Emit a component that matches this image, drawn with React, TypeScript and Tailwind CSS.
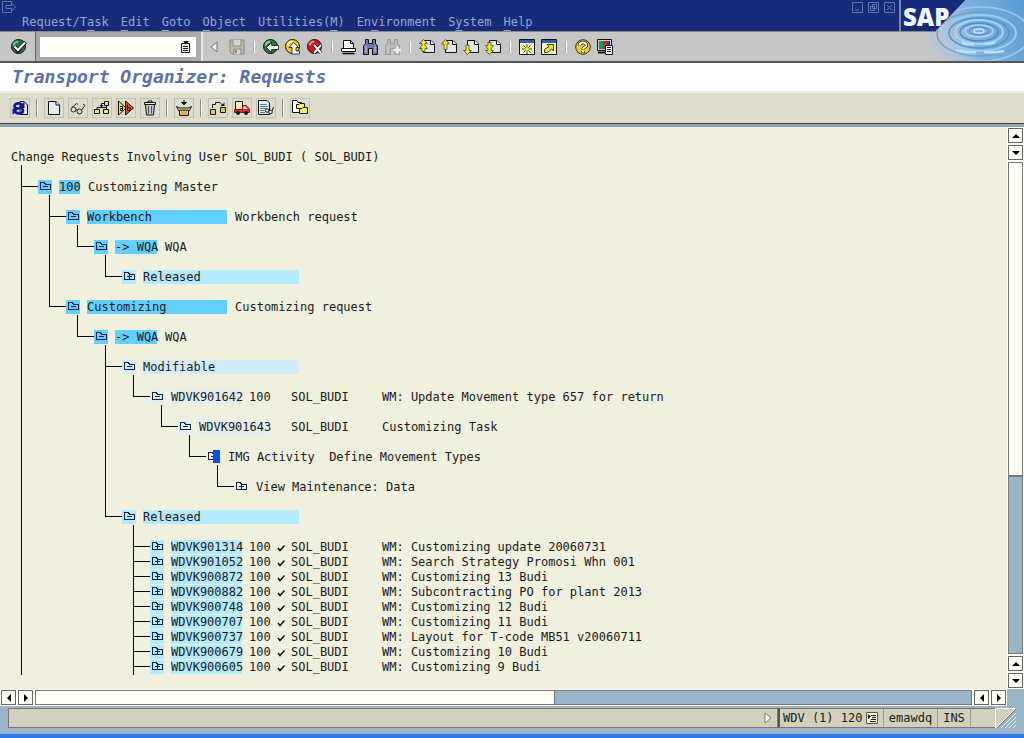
import React from 'react';

const fontMono = "font-['DejaVu_Sans_Mono','Liberation_Mono',monospace]";

/* ---------- icons ---------- */

function Icon({ children, className = 'w-4 h-4' }: { children: React.ReactNode; className?: string }) {
  return (
    <svg viewBox="0 0 16 16" className={`block shrink-0 ${className}`} aria-hidden="true">
      {children}
    </svg>
  );
}

const Ball = ({ fill, shine }: { fill: string; shine: string }) => (
  <>
    <circle cx="7.5" cy="7.5" r="7" fill={fill} stroke="#111" />
    <path d="M2.5 6.5A5 5 0 0 1 7 2.5" stroke={shine} strokeWidth="2" fill="none" />
  </>
);

const EnterIcon = () => (
  <Icon>
    <Ball fill="#1f7a3c" shine="#7fce8d" />
    <path d="M3.5 7.5L7 11.5L14.5 3" stroke="#111" strokeWidth="4" fill="none" />
    <path d="M3.5 7.5L7 11L14 3.5" stroke="#fff" strokeWidth="2.2" fill="none" />
  </Icon>
);

const BackIcon = () => (
  <Icon>
    <Ball fill="#1f7a3c" shine="#8fd89b" />
    <path d="M3.5 8.5L8.5 3.5V6.5H15.5V10.5H8.5V13.5Z" fill="#fff" stroke="#111" strokeWidth=".8" />
  </Icon>
);

const ExitIcon = () => (
  <Icon>
    <Ball fill="#f2c81c" shine="#fff7a0" />
    <path d="M8.5 3.5L13.5 8.5H11V12H14.5V15H7V8.5H4Z" fill="#fff" stroke="#111" strokeWidth=".8" />
  </Icon>
);

const CancelIcon = () => (
  <Icon>
    <Ball fill="#d01424" shine="#ff8d8d" />
    <path d="M7 6L14 14M14 6L7 14" stroke="#111" strokeWidth="3.4" />
    <path d="M7 6L14 14M14 6L7 14" stroke="#fff" strokeWidth="2" />
  </Icon>
);

const SaveIcon = () => (
  <Icon>
    <path d="M1 1H15V15H3L1 13Z" fill="#c5b9a3" stroke="#8b857b" />
    <path d="M4 1V7H12V1M5 15V10H12V15" fill="#d6d3cc" stroke="#8b857b" />
    <path d="M7 11V14" stroke="#8b857b" strokeWidth="2" />
  </Icon>
);

const PrintIcon = () => (
  <Icon>
    <path d="M2.5 9.5V1.5H9.5L12.5 4.5V9.5" fill="#fff" stroke="#111" />
    <path d="M9.5 1.5V4.5H12.5" fill="none" stroke="#111" />
    <path d="M.5 9.5H14.5V12.5H.5Z" fill="#fff" stroke="#111" />
    <path d="M1.5 14.5H13.5" stroke="#111" strokeWidth="1.6" />
  </Icon>
);

const FindIcon = ({ dim = false }: { dim?: boolean }) => (
  <Icon>
    <path
      d="M2.5 .5H5.5V4.5H9.5V.5H12.5V4.5L14.5 7V15.5H9.5V9.5H5.5V15.5H.5V7L2.5 4.5Z"
      fill={dim ? '#b9b9b9' : '#6d77a8'}
      stroke={dim ? '#999' : '#111'}
    />
    <path d="M3 6.5V13.5M12 6.5V13.5" stroke={dim ? '#d2d2d2' : '#c3cbe6'} />
    {dim && <path d="M9 11H16M12.5 7.5V14.5" stroke="#eee" strokeWidth="2.4" />}
  </Icon>
);

const pageArrows = {
  first: 'M4.5 .5L8.5 4.5H6V6L8.5 9.5H6V12.5H3V9.5H.5L3 6V4.5H.5Z',
  prev: 'M4.5 .5L8.5 5H6V10.5H3V5H.5Z',
  next: 'M4.5 15.5L8.5 11.5H6V6H3V11.5H.5Z',
  last: 'M4.5 15.5L8.5 11.5H6V10L8.5 6.5H6V3.5H3V6.5H.5L3 10V11.5H.5Z',
};

// sheet with one or two page arrows beside it
const PageIcon = ({ kind }: { kind: keyof typeof pageArrows }) => (
  <Icon>
    <path d="M4.5 1.5H12L15.5 5V13.5H4.5Z" fill="#dbe8f4" stroke="#111" />
    <path d="M11.5 1.5V5.5H15.5" fill="#fff" stroke="#111" />
    <path d={pageArrows[kind]} fill="#f8ea1c" stroke="#333" strokeWidth=".7" />
  </Icon>
);

const SessionIcon = () => (
  <Icon>
    <path d="M.5 .5H15.5V15.5H.5Z" fill="#fffcc0" stroke="#111" />
    <path d="M1 1H15V4H1Z" fill="#2a62a8" />
    <path d="M8 5V15M3 10H13M4.5 6.5L11.5 13.5M11.5 6.5L4.5 13.5" stroke="#222" strokeWidth=".9" />
    <circle cx="8" cy="10" r="2" fill="#f5e625" />
  </Icon>
);

const ShortcutIcon = () => (
  <Icon>
    <path d="M.5 .5H15.5V15.5H.5Z" fill="#fffcc0" stroke="#111" />
    <path d="M1 1H15V4H1Z" fill="#2a62a8" />
    <path d="M3.5 13.5V10.5L8 7.5L6 5.5H12.5V12L10.5 10L6.5 13.5Z" fill="#f5e625" stroke="#222" strokeWidth=".9" />
  </Icon>
);

const HelpIcon = () => (
  <Icon>
    <circle cx="8" cy="8" r="7.3" fill="#f0cf28" stroke="#3a2d08" />
    <path d="M4.5 6.5C4.5 2.5 11.5 2.5 11.5 6.3C11.5 8.3 8 8 8 10.5M8 12V14" fill="none" stroke="#222" strokeWidth="3.4" />
    <path d="M4.5 6.5C4.5 2.5 11.5 2.5 11.5 6.3C11.5 8.3 8 8 8 10.3M8 12V13.6" fill="none" stroke="#fff" strokeWidth="1.9" />
  </Icon>
);

const LayoutIcon = () => (
  <Icon>
    <path d="M.5 .5H14.5V11.5H.5Z" fill="#ccc" stroke="#111" />
    <path d="M2 2H6V10H2Z" fill="#1c9a4c" />
    <path d="M6 2H10V10H6Z" fill="#d3202c" />
    <path d="M10 2H13V10H10Z" fill="#2840b8" />
    <path d="M1 13.5H9" stroke="#111" strokeWidth="2" />
    <path d="M8.5 6.5H15.5V15.5H8.5Z" fill="#fff" stroke="#111" />
    <path d="M10 8.5H14M10 10.5H14M10 12.5H14" stroke="#111" />
  </Icon>
);

const RefreshIcon = () => (
  <Icon>
    <path d="M8 1.5H12L15.5 5V14.5H8Z" fill="#dbe8f4" stroke="#111" />
    <path d="M10.5 5.5C8.5 2 2.5 3 2.5 6.5C2.5 8.5 5 8.5 7 8.5" fill="none" stroke="#10189a" strokeWidth="2.6" />
    <path d="M12.5 1.5V8H6.5Z" fill="#10189a" />
    <path d="M2.5 11C4.5 14.5 11 14 11 10.5C11 8.5 9 8 7 8" fill="none" stroke="#10189a" strokeWidth="2.6" />
    <path d="M.5 15V8.5H6.5Z" fill="#10189a" />
  </Icon>
);

const CreateIcon = () => (
  <Icon>
    <path d="M2.5 1.5H10L13.5 5V14.5H2.5Z" fill="#e2edf7" stroke="#111" />
    <path d="M10 1.5V5H13.5" fill="#fff" stroke="#111" />
  </Icon>
);

const GlassesIcon = () => (
  <Icon>
    <g fill="none" stroke="#222">
      <circle cx="3.5" cy="9.5" r="2.5" />
      <circle cx="9.5" cy="11.5" r="2.5" />
      <path d="M6 10C6.5 9 7.2 9.4 7.4 10.2M2 7.5L6.5 3.5L8 4.5M11.5 10L15 5.5L13 4" />
    </g>
  </Icon>
);

const HierarchyIcon = () => (
  <Icon>
    <path d="M10.5 1.5H14.5V5.5H10.5ZM.5 9.5H5.5V13.5H.5ZM9.5 9.5H14.5V13.5H9.5Z" fill="#f2e87a" stroke="#111" />
    <path d="M3 9V7.5H12.5M12.5 5.5V9.5M10 3.5H7.5V7" fill="none" stroke="#111" />
    <path d="M5.5 5H9.5L7.5 7.5Z" fill="#111" />
  </Icon>
);

const ReleaseIcon = () => (
  <Icon>
    <path d="M.5 1L8 8L.5 15Z" fill="#f7e51e" stroke="#111" />
    <path d="M7.5 1L15.5 8L7.5 15Z" fill="#e2543a" stroke="#111" />
    <path d="M2 6.5H4.5V10.5H2.5V8.5H4.5M9.5 4.5V10.5H12V7.5H10" fill="none" stroke="#111" />
  </Icon>
);

const TrashIcon = () => (
  <Icon>
    <path d="M3.5 4.5H12.5L11.5 15H4.5Z" fill="#bfc5cc" stroke="#111" />
    <path d="M2.5 2.5H13.5V4.5H2.5ZM6 2.5V1H10V2.5" fill="#e7e9ec" stroke="#111" />
    <path d="M6.5 6V13.5M9.5 6V13.5" stroke="#555" />
  </Icon>
);

const IncludeIcon = () => (
  <Icon>
    <path d="M8 0V4M5.5 2.5L8 5L10.5 2.5Z" stroke="#111" fill="#111" />
    <path d="M.5 6.5L3 8H13L15.5 6.5L13 11H3Z" fill="#fff7c8" stroke="#111" />
    <path d="M3.5 10H12.5V15.5H3.5Z" fill="#e2b04a" stroke="#111" />
  </Icon>
);

const RelateIcon = () => (
  <Icon>
    <path d="M.5 9.5H5.5V14.5H.5ZM10.5 7.5H15.5V12.5H10.5Z" fill="#e6cf3c" stroke="#111" />
    <path d="M2.5 8V4.5H5.5V2.5H10L12.5 5" fill="none" stroke="#111" />
    <path d="M10.5 6H14.5V2.5Z" fill="#111" />
  </Icon>
);

const TruckIcon = () => (
  <Icon>
    <path d="M1.5 1.5H8.5V9.5H1.5Z" fill="#fdf0b0" stroke="#111" />
    <path d="M.5 9.5H8.5V5.5H12L15.5 9V12.5H.5Z" fill="#e22a2a" stroke="#8a1010" />
    <path d="M9.5 6.5H11.5L13.5 9H9.5Z" fill="#fff" />
    <circle cx="4" cy="13" r="2" fill="#111" />
    <circle cx="12" cy="13" r="2" fill="#111" />
  </Icon>
);

const LogIcon = () => (
  <Icon>
    <path d="M.5 .5H9L11.5 3V14.5H.5Z" fill="#e2edf7" stroke="#111" />
    <path d="M2 4.5H9M2 6.5H10M2 8.5H8M2 10.5H6M2 12.5H7" stroke="#59779c" />
    <circle cx="9" cy="10.5" r="1.8" fill="#fff" stroke="#111" />
    <circle cx="12.5" cy="12" r="1.8" fill="#fff" stroke="#111" />
    <path d="M14 11L15.5 7" stroke="#111" />
  </Icon>
);

const StackIcon = () => (
  <Icon>
    <path d="M.5 .5H5L6 2.5H9.5V12.5H.5Z" fill="#fff" stroke="#111" />
    <path d="M4.5 4.5H7L8 3.5H12.5V8.5H4.5Z" fill="#f7ef62" stroke="#111" />
    <path d="M7.5 8.5H10L11 7.5H15.5V13.5H7.5Z" fill="#f7ef62" stroke="#111" />
  </Icon>
);

const FolderIcon = ({ open }: { open: boolean }) => (
  <svg viewBox="0 0 14 14" className="block h-[14px] w-[14px] shrink-0" shapeRendering="crispEdges" aria-hidden="true">
    <path d="M2.5 2.5H6.5L7.5 4.5H12.5V9.5H2.5Z" fill="none" stroke="#0a2350" />
    <path d="M5 6.5H10" stroke="#0a2350" />
    {!open && <path d="M7.5 4V9" stroke="#0a2350" />}
  </svg>
);

/* ---------- header ---------- */

const menus = [
  ['Request/T', 'a', 'sk'],
  ['', 'E', 'dit'],
  ['', 'G', 'oto'],
  ['', 'O', 'bject'],
  ['Utilities(', 'M', ')'],
  ['En', 'v', 'ironment'],
  ['S', 'y', 'stem'],
  ['', 'H', 'elp'],
];

function MenuBar() {
  return (
    <div className="h-[31px] bg-[#172b7a] border-r border-[#8087a0] text-[#98a5d2]">
      <div className="flex h-[14px] items-center justify-between pl-[2px] pr-[4px]">
        <svg viewBox="0 0 14 12" className="h-3 w-[14px]" fill="none" stroke="#6475b4" aria-hidden="true">
          <path d="M9.5 3.5V.5H.5V11.5H9.5V8.5M4 4.5H10V2.5L13.5 6L10 9.5V7.5H4Z" />
        </svg>
        <div className="flex gap-[5px]">
          {[
            ['Minimize', 'M3 8H7'],
            ['Restore', 'M4.5 2.5H8.5V6.5H4.5ZM2.5 4.5H6.5V8.5H2.5Z'],
            ['Close', 'M3 3L8 8M8 3L3 8'],
          ].map(([label, d]) => (
            <button key={label} aria-label={label}>
              <svg viewBox="0 0 11 11" className="block h-[11px] w-[11px]" fill="none" stroke="#6475b4">
                <path d="M.5 .5H10.5V10.5H.5Z" />
                <path d={d} />
              </svg>
            </button>
          ))}
        </div>
      </div>
      <nav className="flex gap-3 pl-[22px] text-[12px] leading-[16px]">
        {menus.map(([before, key, after]) => (
          <button key={before + key + after} className="whitespace-pre">
            {before}
            <span className="underline underline-offset-4">{key}</span>
            {after}
          </button>
        ))}
      </nav>
    </div>
  );
}

const ToolSep = () => <span className="mx-2 h-3 w-[2px] shrink-0 border-l border-[#aaa] bg-white" />;

function Tools({ items }: { items: [string, React.ReactNode][] }) {
  return (
    <div className="flex gap-[6px]">
      {items.map(([label, icon]) => (
        <button key={label} aria-label={label} title={label}>
          {icon}
        </button>
      ))}
    </div>
  );
}

function StandardToolbar() {
  return (
    <div className="flex h-[30px] items-center border-t border-[#8a8a8a] bg-[#c6c6c6]">
      <div className="flex h-full w-[36px] items-center border-r border-[#666] pl-[11px]">
        <button aria-label="Enter">
          <EnterIcon />
        </button>
      </div>
      <div className="flex h-full w-[167px] items-center border-r-2 border-[#e8e8e8] bg-[#aaa] pl-1">
        <div className="flex h-5 w-[156px] items-center bg-[#fffff8] pr-[5px]">
          <input aria-label="Command" className="h-5 min-w-0 flex-1 bg-transparent px-1 text-[12px] outline-none" />
          <button aria-label="Command history">
            <svg viewBox="0 0 10 12" className="h-3 w-[10px]" aria-hidden="true">
              <path d="M.5 2.5H8.5V11.5H.5Z" fill="#fff" stroke="#111" />
              <path d="M2 0H8L5 3.5Z" fill="#111" />
              <path d="M2 5.5H7M2 7.5H7M2 9.5H7" stroke="#111" />
            </svg>
          </button>
        </div>
      </div>
      <button aria-label="Collapse command field" className="ml-[7px] mr-[11px]">
        <svg viewBox="0 0 8 12" className="h-3 w-2" aria-hidden="true">
          <path d="M7 1V11L1 6Z" fill="#eee" stroke="#777" />
        </svg>
      </button>
      <Tools items={[['Save', <SaveIcon />]]} />
      <ToolSep />
      <Tools
        items={[
          ['Back', <BackIcon />],
          ['Exit', <ExitIcon />],
          ['Cancel', <CancelIcon />],
        ]}
      />
      <ToolSep />
      <Tools
        items={[
          ['Print', <PrintIcon />],
          ['Find', <FindIcon />],
          ['Find next', <FindIcon dim />],
        ]}
      />
      <ToolSep />
      <Tools
        items={[
          ['First page', <PageIcon kind="first" />],
          ['Previous page', <PageIcon kind="prev" />],
          ['Next page', <PageIcon kind="next" />],
          ['Last page', <PageIcon kind="last" />],
        ]}
      />
      <ToolSep />
      <Tools
        items={[
          ['New session', <SessionIcon />],
          ['Generate shortcut', <ShortcutIcon />],
        ]}
      />
      <ToolSep />
      <Tools
        items={[
          ['Help', <HelpIcon />],
          ['Customize local layout', <LayoutIcon />],
        ]}
      />
    </div>
  );
}

function Brand() {
  return (
    <svg viewBox="0 0 124 61" className="block h-[61px] w-[124px] shrink-0 bg-[#c6c6c6]" role="img" aria-label="SAP">
      <defs>
        <linearGradient id="water" x1="0" x2="1" y1="0.2" y2="0">
          <stop offset="0.1" stopColor="#c6c6c6" />
          <stop offset="0.28" stopColor="#b9c4d3" />
          <stop offset="0.5" stopColor="#80b2dd" />
          <stop offset="1" stopColor="#5a9bd2" />
        </linearGradient>
      </defs>
      <rect width="124" height="61" fill="url(#water)" />
      <g fill="none">
        <ellipse cx="79" cy="31" rx="5" ry="2" stroke="#cfeafd" strokeWidth="1.5" />
        <ellipse cx="79" cy="31" rx="10" ry="4" stroke="#4a8cc8" />
        <ellipse cx="79" cy="31" rx="14" ry="6" stroke="#a9d7f7" strokeWidth="1.5" />
        <ellipse cx="79" cy="32" rx="19" ry="9" stroke="#4a8cc8" strokeWidth="1.5" />
        <ellipse cx="79" cy="32" rx="24" ry="12" stroke="#a2d3f6" strokeWidth="2" />
        <ellipse cx="79" cy="33" rx="30" ry="15" stroke="#5593cb" strokeWidth="1.5" />
        <ellipse cx="80" cy="33" rx="36" ry="18" stroke="#9accf2" strokeWidth="2" />
        <ellipse cx="80" cy="34" rx="43" ry="22" stroke="#6ba3d6" strokeWidth="1.5" />
        <ellipse cx="81" cy="34" rx="49" ry="27" stroke="#a0c8ea" strokeWidth="1.5" />
        <path d="M56 50Q68 53 76 52M84 52Q95 53 104 51M62 43Q68 45 74 44M84 44Q90 44 95 42" stroke="#b5e4ff" strokeWidth="2.5" />
      </g>
      <path d="M0 0H66L36 31H0Z" fill="#172b7a" />
      <path d="M66 0L36 31" stroke="#8fb4dc" />
      <path d="M0 31.5H36" stroke="#8a8a8a" />
      <path d="M.5 0V31" stroke="#8087a0" />
      <text x="3" y="26" fill="#eef8ff" className="font-['Open_Sans',sans-serif] text-[24px] font-extrabold">
        SAP
      </text>
    </svg>
  );
}

/* ---------- application toolbar ---------- */

const appTools: [string, React.ReactNode][][] = [
  [['Refresh', <RefreshIcon />]],
  [
    ['Create', <CreateIcon />],
    ['Display', <GlassesIcon />],
    ['Display request', <HierarchyIcon />],
    ['Release directly', <ReleaseIcon />],
    ['Delete', <TrashIcon />],
  ],
  [['Include objects', <IncludeIcon />]],
  [
    ['Change owner', <RelateIcon />],
    ['Transport', <TruckIcon />],
    ['Logs', <LogIcon />],
  ],
  [['Merge requests', <StackIcon />]],
];

function AppToolbar() {
  return (
    <div className="flex h-[30px] items-center bg-[#dedccb] pl-[10px]">
      {appTools.map((group, i) => (
        <React.Fragment key={i}>
          {i > 0 && <span className="mx-[6px] h-[18px] w-[2px] border-l border-[#8f8d80] bg-white" />}
          <div className="flex gap-1">
            {group.map(([label, icon]) => (
              <button
                key={label}
                aria-label={label}
                title={label}
                className="flex h-5 w-5 items-center justify-center border border-[#c2c0ae]"
              >
                {icon}
              </button>
            ))}
          </div>
        </React.Fragment>
      ))}
    </div>
  );
}

/* ---------- request tree ---------- */

// guides: one character per level. "|" line passes, "T" branch, "L" last branch, " " nothing
interface TreeRow {
  guides: string;
  open?: boolean;
  tone?: string;
  tag?: string;
  tagWidth?: string;
  client?: string;
  done?: boolean;
  owner?: string;
  text?: string;
  cursor?: boolean;
}

const STRONG = 'bg-[#62cffd]';
const RELEASED = 'bg-[#b3eafd]';
const OPEN = 'bg-[#d2ecfb]';
const PALE = 'bg-[#e2eef0]';

const nodes: TreeRow[] = [
  { guides: 'T', open: true, tone: STRONG, tag: '100', tagWidth: 'w-[21px]', text: 'Customizing Master' },
  { guides: '|T', open: true, tone: STRONG, tag: 'Workbench', tagWidth: 'w-[140px]', text: 'Workbench request' },
  { guides: '||L', open: true, tone: STRONG, tag: '-> WQA', tagWidth: 'w-[42px]', text: 'WQA' },
  { guides: '|| L', tone: RELEASED, tag: 'Released', tagWidth: 'w-[156px]' },
  { guides: '|L', open: true, tone: STRONG, tag: 'Customizing', tagWidth: 'w-[140px]', text: 'Customizing request' },
  { guides: '| L', open: true, tone: STRONG, tag: '-> WQA', tagWidth: 'w-[42px]', text: 'WQA' },
  { guides: '|  T', open: true, tone: OPEN, tag: 'Modifiable', tagWidth: 'w-[156px]' },
  {
    guides: '|  |L',
    open: true,
    tone: PALE,
    tag: 'WDVK901642',
    tagWidth: 'w-[71px]',
    client: '100',
    owner: 'SOL_BUDI',
    text: 'WM: Update Movement type 657 for return',
  },
  {
    guides: '|  | L',
    open: true,
    tone: PALE,
    tag: 'WDVK901643',
    tagWidth: 'w-[71px]',
    owner: 'SOL_BUDI',
    text: 'Customizing Task',
  },
  { guides: '|  |  L', open: true, cursor: true, text: 'IMG Activity  Define Movement Types' },
  { guides: '|  |   L', text: 'View Maintenance: Data' },
  { guides: '|  L', open: true, tone: RELEASED, tag: 'Released', tagWidth: 'w-[156px]' },
];

const released: [string, string][] = [
  ['WDVK901314', 'WM: Customizing update 20060731'],
  ['WDVK901052', 'WM: Search Strategy Promosi Whn 001'],
  ['WDVK900872', 'WM: Customizing 13 Budi'],
  ['WDVK900882', 'WM: Subcontracting PO for plant 2013'],
  ['WDVK900748', 'WM: Customizing 12 Budi'],
  ['WDVK900707', 'WM: Customizing 11 Budi'],
  ['WDVK900737', 'WM: Layout for T-code MB51 v20060711'],
  ['WDVK900679', 'WM: Customizing 10 Budi'],
  ['WDVK900605', 'WM: Customizing 9 Budi'],
];

const releasedRows: TreeRow[] = released.map(([tag, text]) => ({
  guides: '|   T',
  tone: RELEASED,
  tag,
  tagWidth: 'w-[71px]',
  client: '100',
  done: true,
  owner: 'SOL_BUDI',
  text,
}));

function Guide({ kind, last }: { kind: string; last: boolean }) {
  return (
    <span className={`flex h-[15px] shrink-0 flex-col ${last ? 'w-[17px]' : 'w-7'}`}>
      <span
        className={`h-[7px] border-black ${kind === ' ' ? '' : 'border-l'} ${kind === 'T' || kind === 'L' ? 'border-b' : ''}`}
      />
      <span className={`h-2 border-black ${kind === '|' || kind === 'T' ? 'border-l' : ''}`} />
    </span>
  );
}

// empty line between two nodes, only the stems go through it
function Spacer({ guides }: { guides: string }) {
  return (
    <div className="flex h-[15px]" aria-hidden="true">
      {guides.split('').map((g, i) => (
        <span key={i} className={`w-7 ${g === ' ' ? '' : 'border-l border-black'}`} />
      ))}
    </div>
  );
}

function Row({ row, spaced }: { row: TreeRow; spaced: boolean }) {
  const { guides, open = false, tone = '', tag, tagWidth = '', client, done, owner, text, cursor } = row;
  return (
    <li>
      {spaced && <Spacer guides={guides} />}
      <div className="flex h-[15px] whitespace-pre">
        {guides.split('').map((g, i) => (
          <Guide key={i} kind={g} last={i === guides.length - 1} />
        ))}
        <button aria-label={open ? 'Collapse' : 'Expand'} className={`relative h-[14px] w-[14px] shrink-0 ${tone}`}>
          <FolderIcon open={open} />
          {cursor && <span className="absolute right-0 top-0 h-[13px] w-[7px] bg-[#0a4ef0]" />}
        </button>
        {tag && <span className={`ml-[7px] h-[14px] shrink-0 ${tagWidth} ${tone}`}>{tag}</span>}
        {client && <span className="ml-[7px] w-[21px] shrink-0">{client}</span>}
        {client && (
          <span className="flex w-[21px] shrink-0 items-center justify-center">
            {done && (
              <svg viewBox="0 0 8 8" className="h-2 w-2" aria-label="Released">
                <path d="M1 4L3 6.5L7.5 1.5" fill="none" stroke="#111" strokeWidth="1.5" />
              </svg>
            )}
          </span>
        )}
        {owner && <span className={`w-[91px] shrink-0 ${client ? '' : 'ml-[21px]'}`}>{owner}</span>}
        {text && <span className={owner ? '' : 'ml-2'}>{text}</span>}
      </div>
    </li>
  );
}

function RequestTree() {
  return (
    <main className="min-w-0 flex-1 overflow-hidden pt-[23px] text-[12px] leading-[15px] text-[#1a1a1a]">
      <h2 className="h-[15px] whitespace-pre pl-[11px]">Change Requests Involving User SOL_BUDI ( SOL_BUDI)</h2>
      <ul className="pl-[21px]">
        {nodes.map((row, i) => (
          <Row key={i} row={row} spaced />
        ))}
        {releasedRows.map((row, i) => (
          <Row key={row.tag} row={row} spaced={i === 0} />
        ))}
      </ul>
    </main>
  );
}

/* ---------- scroll bars ---------- */

const arrows = {
  up: 'M4 2L8 6H0Z',
  down: 'M4 6L8 2H0Z',
  left: 'M2 4L6 0V8Z',
  right: 'M6 4L2 0V8Z',
};

function ScrollButton({ dir }: { dir: keyof typeof arrows }) {
  return (
    <button
      aria-label={`Scroll ${dir}`}
      className="flex h-[15px] w-[15px] shrink-0 items-center justify-center border border-[#666] bg-[#fffff8]"
    >
      <svg viewBox="0 0 8 8" className="h-2 w-2" aria-hidden="true">
        <path d={arrows[dir]} fill="#000" />
      </svg>
    </button>
  );
}

function VerticalScroll() {
  return (
    <div className="flex w-[17px] shrink-0 flex-col items-center gap-[2px] bg-[#fffff8] py-px">
      <ScrollButton dir="up" />
      <ScrollButton dir="down" />
      <div className="flex w-[15px] flex-1 flex-col border border-[#777] bg-[#9ab5c8]">
        <div className="h-[64%] border-b-2 border-[#777] bg-[#fffff8]" />
      </div>
      <ScrollButton dir="up" />
      <ScrollButton dir="down" />
    </div>
  );
}

function HorizontalScroll() {
  return (
    <div className="flex h-[17px] bg-[#9ab5c8]">
      <div className="flex flex-1 items-center gap-[2px] bg-[#fffff8] px-px">
        <ScrollButton dir="left" />
        <ScrollButton dir="right" />
        <div className="flex h-[15px] flex-1 border border-[#777] bg-[#9ab5c8]">
          <div className="w-5/9 border-r border-[#777] bg-[#fffff8]" />
        </div>
        <ScrollButton dir="left" />
        <ScrollButton dir="right" />
      </div>
      <div className="w-[17px]" />
    </div>
  );
}

/* ---------- status bar ---------- */

function StatusBar() {
  return (
    <footer className="flex h-7 items-start bg-[#9ab5c8] px-2 pt-[2px] text-[12px] text-[#1a1a1a]">
      <div className="flex h-5 flex-1 items-center justify-end border border-[#777] bg-[#d2d0bd] pr-[5px]">
        <svg viewBox="0 0 8 12" className="h-3 w-2" aria-hidden="true">
          <path d="M1 1V11L7 6Z" fill="#fff" stroke="#777" />
        </svg>
      </div>
      <div className="flex h-5 items-center border-y border-l-2 border-y-[#777] border-l-[#555] bg-[#d2d0bd]">
        <div className="flex h-full w-[104px] items-center justify-between border-r border-[#999] pl-[3px] pr-[5px]">
          <span className="whitespace-nowrap">WDV (1) 120</span>
          <button aria-label="System information">
            <svg viewBox="0 0 12 12" className="block h-3 w-3" aria-hidden="true">
              <path d="M.5 .5H11.5V11.5H.5Z" fill="#fffde0" stroke="#555" />
              <path d="M2 2L5 4.5L2 7Z" fill="#111" />
              <path d="M5 3.5H10M6 5.5H10M5 7.5H10M4 9.5H10" stroke="#111" />
            </svg>
          </button>
        </div>
        <span className="flex h-full w-[54px] items-center justify-center border-r border-[#999]">emawdq</span>
        <span className="flex h-full w-[33px] items-center justify-center border-r border-[#999]">INS</span>
        <span className="w-6" />
      </div>
      <svg viewBox="0 0 21 20" className="h-5 w-[21px] shrink-0" aria-hidden="true">
        <path d="M0 0H20L2 20H0Z" fill="#d2d0bd" />
        <path d="M.5 20V.5H20.5L1 20" fill="none" stroke="#fff" />
        <path d="M2 20L21 1" stroke="#666" />
        <path d="M6 20L21 5M10 20L21 9M14 20L21 13M18 20L21 17" stroke="#e8f0f4" />
      </svg>
    </footer>
  );
}

export default function App() {
  return (
    <div className={`flex h-screen flex-col overflow-hidden bg-[#f0f0de] ${fontMono}`}>
      <header>
        <div className="flex">
          <div className="min-w-0 flex-1">
            <MenuBar />
            <StandardToolbar />
          </div>
          <Brand />
        </div>
        <div className="flex h-8 items-center border-y-2 border-t-[#555] border-b-[#ecebdc] bg-white pl-3">
          <h1 className="text-[18px] font-bold italic leading-6 text-[#5c70ad]">Transport Organizer: Requests</h1>
        </div>
        <AppToolbar />
        <div className="h-1 border-t border-[#444] bg-[#8ba5b3]" />
      </header>
      <div className="flex min-h-0 flex-1">
        <RequestTree />
        <VerticalScroll />
      </div>
      <HorizontalScroll />
      <StatusBar />
      <div className="h-1 bg-[#2f78e8]" />
    </div>
  );
}
